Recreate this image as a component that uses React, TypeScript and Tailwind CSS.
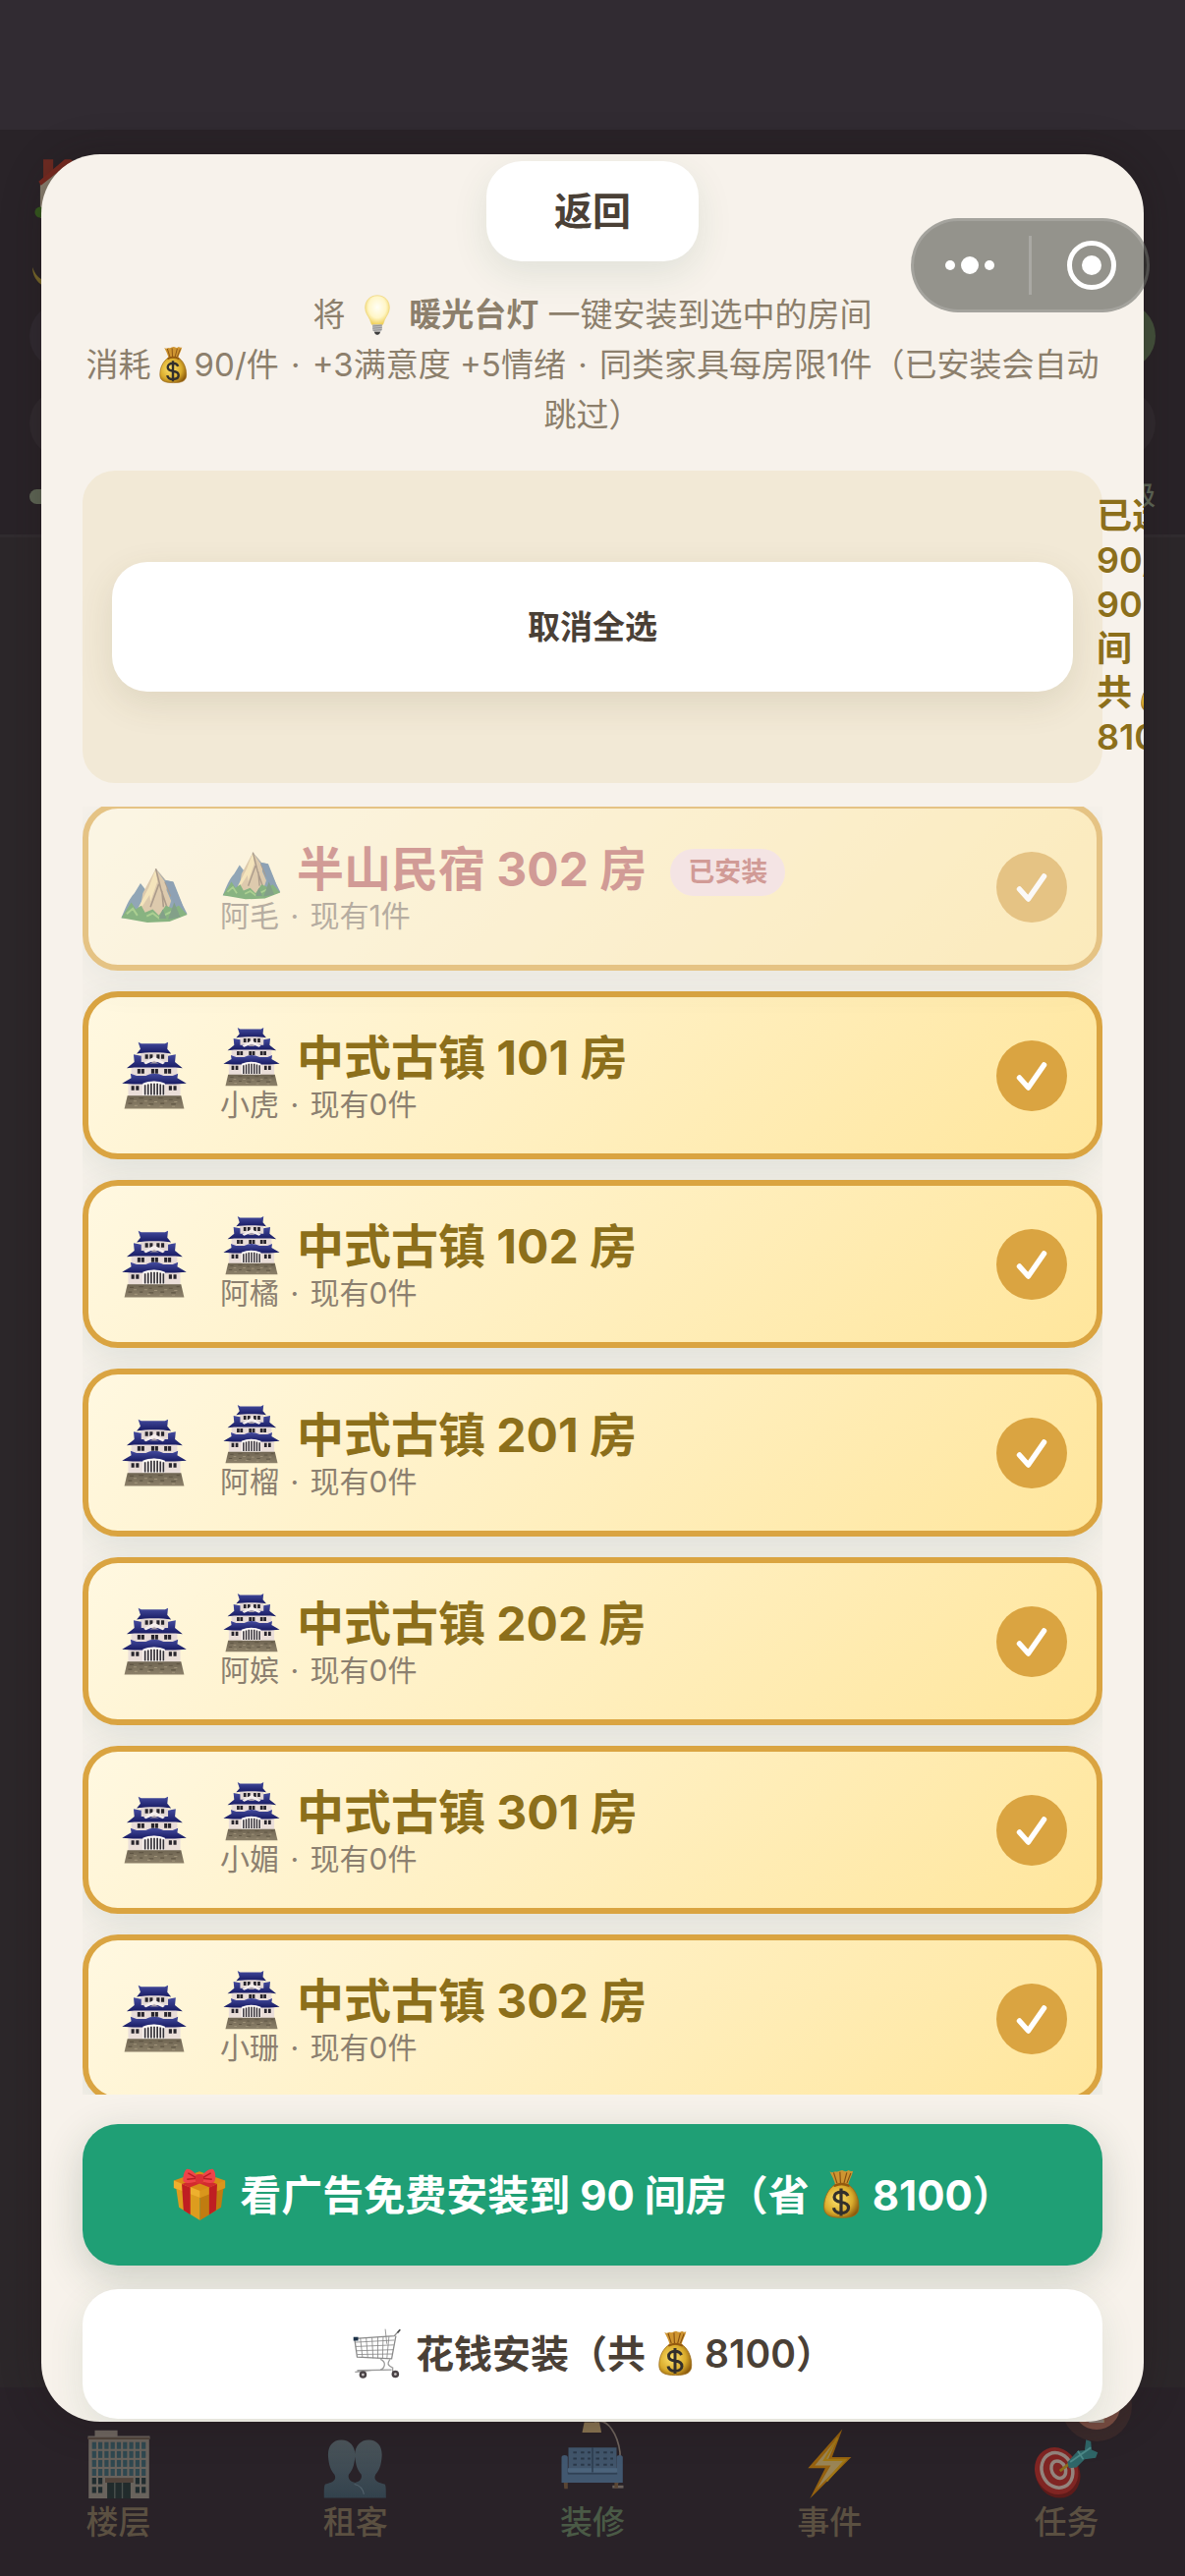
import type { ReactNode } from "react";

type IconProps = { className?: string };

function Art({ className = "", label, children }: { className?: string; label: string; children: ReactNode }) {
  return (
    <svg viewBox="0 0 100 100" role="img" aria-label={label} className={`overflow-visible ${className}`} fill="none">
      {children}
    </svg>
  );
}

function Bulb({ className }: IconProps) {
  return (
    <Art className={className} label="灯泡">
      <defs>
        <radialGradient id="bulb" cx="0.5" cy="0.4" r="0.6">
          <stop offset="0" stopColor="#fffef6" />
          <stop offset="0.6" stopColor="#fff6c8" />
          <stop offset="1" stopColor="#efcf55" />
        </radialGradient>
      </defs>
      <path d="M50 4C33 4 22 16 22 32c0 13 7 19 11 28 2 5 3 10 5 12h24c2-2 3-7 5-12 4-9 11-15 11-28C78 16 67 4 50 4Z" fill="url(#bulb)" stroke="#ecd275" strokeWidth="1.5" />
      <path d="M39 71h22v13l-4 4H43l-4-4Z" fill="#b9b9b9" />
      <path d="M39 75l22-2M39 80l22-2M40 85l20-2" stroke="#858585" strokeWidth="1.6" />
      <path d="M43 88h14c-1 5-4 7-7 7s-6-2-7-7Z" fill="#3e3e3e" />
    </Art>
  );
}

function MoneyBag({ className }: IconProps) {
  return (
    <Art className={className} label="金币">
      <defs>
        <radialGradient id="bag" cx="0.4" cy="0.45" r="0.65">
          <stop offset="0" stopColor="#ffe36c" />
          <stop offset="0.65" stopColor="#d9ab2c" />
          <stop offset="1" stopColor="#8c5a0c" />
        </radialGradient>
      </defs>
      <path d="M30 9c4 3 7 1 10 0 4 2 8-2 12-2 4 2 8 3 11 0 3 2 6 2 8 1-2 9-7 16-9 25H40c-2-9-6-16-10-24Z" fill="#cf9531" />
      <path d="M37 11l6 19M48 10l1 20M60 11l-5 19M67 12l-7 18" stroke="#855012" strokeWidth="2" />
      <path d="M40 32h22c12 7 19 22 19 39 0 14-8 19-30 19s-31-5-31-19c0-17 8-32 20-39Z" fill="url(#bag)" stroke="#9b6a17" strokeWidth="1.5" />
      <path d="M39 34c8-4 16-4 24 0" stroke="#93590f" strokeWidth="4" strokeLinecap="round" />
      <path d="M62 52c-2-5-6-7-12-7-7 0-12 4-12 9 0 6 5 8 12 9 8 1 13 4 13 10s-6 9-13 9-12-3-13-9M50 39v48" stroke="#33302c" strokeWidth="5.5" />
    </Art>
  );
}

function Mountain({ className }: IconProps) {
  return (
    <Art className={className} label="山">
      <path d="M7 90C12 78 17 65 24 58l8-13 8 10 12-29 13 15 10 2 12 30 6 12-24 7-29 1Z" fill="#4e7594" />
      <path d="M52 26L35 58l-5 32 34 2 8-24-6-14 1-10-6-8Z" fill="#cdb184" />
      <path d="M52 26L43 50l-14 27 6-3 9-14 1 9 9-26Z" fill="#f3dc9c" />
      <path d="M52 26l7 28 11 32M56 46L45 76M60 55l2 21M64 43l8 19" stroke="#79624c" strokeWidth="2" />
      <path d="M52 26l12 15 10 2 18 43-15-8-7-22-6-13Z" fill="#496d90" />
      <path d="M7 90l13-20 6 9 7-5 5 9 10-4 8 8 9-13 9 4 8-4 11 12-23 9-29 1Z" fill="#3f8a3c" />
      <path d="M14 85l8-7 6 9M40 88l8-4 9 7M64 86l8-4 10 4" stroke="#79b957" strokeWidth="2.5" />
      <path d="M68 92l8-22 8 19M56 91l5-12 5 12" fill="#376a49" />
    </Art>
  );
}

function Castle({ className }: IconProps) {
  return (
    <Art className={className} label="古镇">
      <defs>
        <linearGradient id="roof" x1="0" y1="0" x2="0" y2="1">
          <stop offset="0" stopColor="#444b9e" />
          <stop offset="1" stopColor="#181b63" />
        </linearGradient>
        <linearGradient id="stone" x1="0" y1="0" x2="0" y2="1">
          <stop offset="0" stopColor="#6f6552" />
          <stop offset="1" stopColor="#8d816a" />
        </linearGradient>
      </defs>
      <path d="M32 18h36v16H32Z" fill="#e3d8d5" />
      <path d="M29 6l4 2h31l4-2-1 9 5 6c-12-2-32-2-45 0l5-6Z" fill="url(#roof)" />
      <path d="M20 36h60v20H20Z" fill="#e8dcd8" />
      <path d="M23 22l10 2v8h35v-8l10-2-1 10 10 8-9-1H24l-10 1 10-8Z" fill="url(#roof)" />
      <path d="M38 22h4v6h-4ZM44 22h4v6h-4ZM53 22h4v6h-4ZM59 22h4v6h-4Z" fill="#27242c" />
      <path d="M36 33l14-8 14 8-3 2-11-5-11 5Z" fill="#f5eeec" />
      <path d="M44 34l6-3 6 3Z" fill="#a59ba5" />
      <path d="M28 41h4v6h-4ZM33 41h4v6h-4ZM46 41h4v6h-4ZM51 41h4v6h-4ZM63 41h4v6h-4ZM68 41h4v6h-4Z" fill="#27242c" />
      <path d="M16 56h68v21H16Z" fill="#eaded9" />
      <path d="M19 47l8 3h12c4-2 7-3 11-3s8 1 12 3h12l7-3-1 6 12 7-15 1H63c-8-5-18-5-26 0H22L8 60l12-7Z" fill="url(#roof)" />
      <path d="M35 76V60c9-4 20-4 29 0v16Z" fill="#fffaf6" />
      <path d="M38 75V62M42 75V61M46 75V60M50 75V60M54 75V60M58 75V61M62 75V62" stroke="#353138" strokeWidth="2.2" />
      <path d="M20 63h4v6h-4ZM26 63h4v6h-4ZM69 63h4v6h-4ZM75 63h4v6h-4Z" fill="#27242c" />
      <path d="M15 76h70l4 17H11Z" fill="url(#stone)" />
      <path d="M18 80h5M30 79h6M43 81h4M55 79h6M69 81h5M79 79h4M16 86h5M31 86h4M43 87h6M58 86h5M72 87h6" stroke="#5f5543" strokeWidth="1.4" />
      <path d="M23 83h4M37 83h4M50 84h4M63 83h4M76 84h4M24 89h4M41 89h4M57 90h4M73 90h4" stroke="#a09379" strokeWidth="1.4" />
    </Art>
  );
}

function Gift({ className }: IconProps) {
  return (
    <Art className={className} label="礼物">
      <path d="M8 31l43 19v45L14 72Z" fill="#dd9c1e" />
      <path d="M93 31L51 50v45l37-23Z" fill="#c07c10" />
      <path d="M5 25L50 9l45 16v13L51 55 5 38Z" fill="#d98d17" />
      <path d="M5 25l46 18v12L5 38Z" fill="#eeb02e" />
      <path d="M95 25L51 43v12l44-17Z" fill="#d9961c" />
      <path d="M19 31l15 6v48l-12-8ZM81 31l-14 6v48l12-8Z" fill="#bf1e22" />
      <path d="M19 31l48-17 12 5-46 18ZM81 31L34 14l-12 5 46 18Z" fill="#d22b2e" />
      <path d="M48 19C41 9 32 3 27 5c-5 5-7 17-5 22 7 4 18 2 26-3ZM52 19c7-10 17-16 22-14 5 5 5 17 2 22-6 4-16 2-24-3Z" fill="#ee4449" />
      <path d="M30 12l16 9-18 2M70 12l-16 9 18 2" stroke="#b81d24" strokeWidth="2.5" />
      <rect x="43" y="14" width="14" height="16" rx="5" fill="#dc3036" />
    </Art>
  );
}

function Cart({ className }: IconProps) {
  return (
    <Art className={className} label="购物车">
      <path d="M7 21l75-5 11-12M7 21l5 35 65 3 8-43" stroke="#8b8b8b" strokeWidth="2.4" />
      <path d="M8 28l74-4M9 36l72-3M10 44l70-2M12 51l66-1M18 20l4 36M29 19l3 38M40 19l2 39M51 18v40M61 18l-1 40M72 17l-4 42M65 3l3 28" stroke="#858585" strokeWidth="1.5" />
      <path d="M56 60c12 5 8 17 0 20L8 84M74 60c-5 7-6 11 5 16v9M12 81l65-1" stroke="#9b9b9b" strokeWidth="2.4" />
      <path d="M5 18h9v7H5Z" fill="#1d3249" />
      <path d="M93 4l-5 6" stroke="#4b4b4b" strokeWidth="3" />
      <circle cx="23" cy="89" r="7" fill="#4a4346" />
      <circle cx="84" cy="88" r="7" fill="#4a4346" />
      <circle cx="23" cy="89" r="2.5" fill="#cfcaca" />
      <circle cx="84" cy="88" r="2.5" fill="#cfcaca" />
    </Art>
  );
}

function House({ className }: IconProps) {
  return (
    <Art className={className} label="房子">
      <path d="M18 8h13v22L18 40Z" fill="#6e2b22" />
      <path d="M50 14L14 40v44h72V40Z" fill="#8b8170" />
      <path d="M46 8L12 37l3 5 35-28 35 28 3-5-34-29Z" fill="#7a2a20" />
      <circle cx="14" cy="77" r="7" fill="#35591e" />
    </Art>
  );
}

function Building({ className }: IconProps) {
  const rows = [21, 34, 47, 60];
  const cols = [11, 20, 29, 38, 47, 56, 65, 74, 83];
  return (
    <Art className={className} label="楼层">
      <path d="M15 4h33v9H15ZM5 12h90v4H5Z" fill="#6e6660" />
      <path d="M5 14h90v3H5Z" fill="#51443c" />
      <path d="M6 17h88v86H6Z" fill="#69635d" />
      {rows.map((y) => cols.map((x) => <rect key={`${x}-${y}`} x={x} y={y} width="6" height="10" fill="#2f4850" />))}
      <path d="M11 73h6v9h-6ZM20 73h6v9h-6ZM74 73h6v9h-6ZM83 73h6v9h-6ZM11 86h6v9h-6ZM20 86h6v9h-6ZM74 86h6v9h-6ZM83 86h6v9h-6Z" fill="#202c2f" />
      <path d="M30 73h41v7H30Z" fill="#4f423a" />
      <path d="M33 80h34v23H33Z" fill="#212b2c" />
      <path d="M44 80v23M55 80v23" stroke="#4b514e" strokeWidth="2" />
    </Art>
  );
}

function People({ className }: IconProps) {
  return (
    <Art className={className} label="租客">
      <defs>
        <linearGradient id="people" x1="0" y1="0" x2="0" y2="1">
          <stop offset="0" stopColor="#4b555b" />
          <stop offset="1" stopColor="#33424d" />
        </linearGradient>
      </defs>
      <path d="M29 18c-13 0-20 10-19 24 1 13 4 20 9 26 4 8-2 12-13 14-2 2-2 6-2 20h90c0-14 0-18-2-20-11-2-17-6-13-14 5-6 8-13 9-26 1-14-6-24-19-24S48 28 49 42c1 13 4 20 9 26 2 6-2 10-9 12-7-2-11-6-9-12 5-6 8-13 9-26 1-14-7-24-20-24Z" fill="url(#people)" />
      <path d="M48 82c9 2 13 8 14 15" stroke="#52616b" strokeWidth="1.5" />
    </Art>
  );
}

function Sofa({ className }: IconProps) {
  return (
    <Art className={className} label="装修">
      <path d="M53-8c20-8 34 20 37 44 1 21-1 35-5 51" stroke="#6e645d" strokeWidth="2.4" />
      <path d="M38-8h22l3 15H35Z" fill="#8a7552" />
      <path d="M79 86h16" stroke="#69605a" strokeWidth="4" />
      <path d="M8 78h6v11H9ZM82 78h5v10h-5Z" fill="#594534" />
      <path d="M15 29h70v38H15Z" fill="#41556b" />
      <path d="M5 43c0-4 9-4 9 0v23h71V43c0-4 9-4 9 0v37H5Z" fill="#425870" />
      <path d="M14 59h72v6H14Z" fill="#4c647c" />
      <path d="M50 29v36M14 67h72" stroke="#2b3b4d" strokeWidth="2" />
      {[36, 45, 54].map((y) => (
        <path key={y} d={`M22 ${y}h5M33 ${y}h5M43 ${y}h4M55 ${y}h5M66 ${y}h5M76 ${y}h4`} stroke="#2a3849" strokeWidth="3" />
      ))}
    </Art>
  );
}

function Bolt({ className }: IconProps) {
  return (
    <Art className={className} label="事件">
      <path d="M69 2L19 59h25L22 103 82 43H54Z" fill="#95610f" />
      <path d="M62 15L29 55h23L32 89 73 47H48Z" fill="#998455" />
      <path d="M62 15L43 47h30L46 78" stroke="#a17714" strokeWidth="3" />
    </Art>
  );
}

function Target({ className }: IconProps) {
  return (
    <Art className={className} label="任务">
      <ellipse cx="38" cy="67" rx="32" ry="36" transform="rotate(-25 38 67)" fill="#5d1b1a" />
      <ellipse cx="36" cy="63" rx="31" ry="35" transform="rotate(-25 36 63)" fill="#802523" />
      <ellipse cx="37" cy="62" rx="22" ry="26" transform="rotate(-25 37 62)" stroke="#93847d" strokeWidth="5" />
      <ellipse cx="39" cy="61" rx="10" ry="13" transform="rotate(-25 39 61)" stroke="#93847d" strokeWidth="5" />
      <path d="M41 63l13-10" stroke="#8b6d1c" strokeWidth="4" />
      <path d="M52 50l15-16 10-1 2-16 7 3 1 12 9 4-3 8-16 2-12 12-11 1Z" fill="#2f6668" />
      <path d="M56 50l30-21M67 34l8 12" stroke="#4d8a89" strokeWidth="2.5" />
    </Art>
  );
}

type Room = { icon: "mountain" | "castle"; name: string; tenant: string; count: number; installed?: boolean };

const rooms: Room[] = [
  { icon: "mountain", name: "半山民宿 302 房", tenant: "阿毛", count: 1, installed: true },
  { icon: "castle", name: "中式古镇 101 房", tenant: "小虎", count: 0 },
  { icon: "castle", name: "中式古镇 102 房", tenant: "阿橘", count: 0 },
  { icon: "castle", name: "中式古镇 201 房", tenant: "阿榴", count: 0 },
  { icon: "castle", name: "中式古镇 202 房", tenant: "阿嫔", count: 0 },
  { icon: "castle", name: "中式古镇 301 房", tenant: "小媚", count: 0 },
  { icon: "castle", name: "中式古镇 302 房", tenant: "小珊", count: 0 },
];

function Dot() {
  return <span className="mx-[3px]">·</span>;
}

function RoomRow({ room }: { room: Room }) {
  const Icon = room.icon === "mountain" ? Mountain : Castle;
  return (
    <li className={room.installed ? "opacity-60" : ""}>
      <label className="flex h-[171px] items-center rounded-[36px] border-6 border-[#daa441] bg-linear-135 from-[#fff8e1] to-[#ffe69c] pr-[30px] pl-7 shadow-[0_12px_36px_rgba(30,90,70,0.1)]">
        <Icon className="h-[78px] w-[78px] shrink-0" />
        <span className="ml-7 flex min-w-0 flex-1 flex-col">
          <span className={`flex h-[59px] items-center text-[48px] leading-[59px] font-bold ${room.installed ? "text-[#b8625f]" : "text-[#8c6f1b]"}`}>
            <Icon className="mr-3 -ml-[2px] h-[68px] w-[68px] shrink-0" />
            <span>{room.name}</span>
            {room.installed && (
              <span className="mt-2 ml-6 rounded-full bg-[#f3dce1] px-[18px] text-[27px] leading-[48px] font-semibold">已安装</span>
            )}
          </span>
          <span className="text-[30px] leading-[37px] text-[#8c8070]">
            {room.tenant} <Dot /> 现有{room.count}件
          </span>
        </span>
        <span className="grid h-[72px] w-[72px] shrink-0">
          <input type="checkbox" defaultChecked className="col-start-1 row-start-1 h-[72px] w-[72px] appearance-none rounded-full bg-[#daa441]" />
          <svg viewBox="0 0 72 72" className="pointer-events-none col-start-1 row-start-1" fill="none" aria-hidden="true">
            <path d="M23.5 38L32.5 48L48.5 25" stroke="#fff" strokeWidth="5.5" strokeLinecap="round" strokeLinejoin="round" />
          </svg>
        </span>
      </label>
    </li>
  );
}

const tabs = [
  { label: "楼层", Icon: Building },
  { label: "租客", Icon: People },
  { label: "装修", Icon: Sofa, active: true },
  { label: "事件", Icon: Bolt },
  { label: "任务", Icon: Target, badge: 2 },
];

function Backdrop() {
  return (
    <div className="flex min-h-screen flex-col bg-[#2c272a]">
      <div className="h-[132px] bg-[#312b32]" />
      <header className="flex flex-col border-b-3 border-[#312c30] bg-[#292328] px-[30px] pt-6 pb-6">
        <House className="h-[78px] w-[78px]" />
        <svg viewBox="0 0 42 42" className="mt-6 h-[42px] w-[42px]" aria-hidden="true">
          <path d="M3 14c3 8 7 12 13 14l-2 5C7 29 3 22 3 14Z" fill="#77672a" />
        </svg>
        <div className="mt-2 flex h-[68px] justify-between">
          <div className="w-1/2 rounded-[36px] bg-[#302a31]" />
          <div className="w-1/4 rounded-[36px] bg-[#44523c]" />
        </div>
        <div className="mt-5 h-[70px] rounded-[36px] bg-[#302a2f]" />
        <div className="mt-6 flex h-[30px] items-center justify-between text-[27px] leading-[30px] font-medium text-[#5f6858]">
          <div className="h-[15px] w-1/2 rounded-full bg-[#5f6756]" />
          <span>级</span>
        </div>
      </header>
      <div className="flex-1" />
      <nav className="grid h-[192px] grid-cols-5 bg-[#292228]">
        {tabs.map(({ label, Icon, active, badge }) => (
          <button key={label} type="button" className={`relative flex flex-col items-center pt-[41px] text-[33px] leading-[45px] font-medium ${active ? "text-[#4a5a46]" : "text-[#5b5041]"}`}>
            <Icon className="h-[70px] w-[70px]" />
            <span className="mt-1">{label}</span>
            {badge && (
              <span className="absolute -top-[17px] right-[54px] -z-0 grid h-[72px] w-[72px] place-items-center rounded-full bg-[#3a2a2b]">
                <span className="h-12 w-12 rounded-full bg-[#7a4e43] pt-3 text-[30px] leading-[36px] font-bold text-[#8f857d]">{badge}</span>
              </span>
            )}
          </button>
        ))}
      </nav>
    </div>
  );
}

function Capsule() {
  return (
    <div className="absolute top-[222px] right-9 flex h-24 w-[243px] items-center rounded-full border-3 border-white/15 bg-[#393b36]/52">
      <button type="button" aria-label="更多" className="flex h-full flex-1 items-center justify-center gap-[6px] pr-1">
        <span className="h-[10px] w-[10px] rounded-full bg-white" />
        <span className="h-[18px] w-[18px] rounded-full bg-white" />
        <span className="h-[10px] w-[10px] rounded-full bg-white" />
      </button>
      <span className="h-[60px] w-[3px] bg-white/20" />
      <button type="button" aria-label="关闭" className="flex h-full flex-1 items-center justify-center pl-1">
        <span className="grid h-[50px] w-[50px] place-items-center rounded-full border-5 border-white">
          <span className="h-5 w-5 rounded-full bg-white" />
        </span>
      </button>
    </div>
  );
}

export default function App() {
  return (
    <div className="relative min-h-screen overflow-hidden font-[Inter,'Noto_Sans_CJK_SC',sans-serif] text-[#4a4036]">
      <Backdrop />
      <div className="absolute inset-0 flex items-center px-[42px]">
        <section className="flex h-[88vh] w-full flex-col overflow-hidden rounded-[60px] bg-[#f7f2eb] px-[42px] pt-[7px] shadow-[0_0_40px_rgba(30,20,20,0.3)]">
          <button type="button" className="h-[102px] w-[216px] shrink-0 self-center rounded-[36px] bg-white text-[39px] font-semibold shadow-[0_12px_36px_rgba(30,90,60,0.1)]">
            返回
          </button>
          <p className="mt-[29px] shrink-0 text-center text-[33px] leading-[51px] text-[#8c7f6c]">
            将 <Bulb className="mx-px -mt-1 inline-block h-11 w-11" /> <strong className="font-semibold">暖光台灯</strong> 一键安装到选中的房间
            <br />
            消耗
            <MoneyBag className="-mt-1 inline-block h-11 w-11" />
            90/件 <Dot /> +3满意度 +5情绪 <Dot /> 同类家具每房限1件（已安装会自动跳过）
          </p>
          <div className="mt-[31px] flex shrink-0 items-center gap-6 rounded-[33px] bg-[#f2e9d6] px-[30px] py-6">
            <button type="button" className="h-[132px] w-full shrink-0 rounded-[36px] bg-white text-[33px] font-semibold shadow-[0_12px_36px_rgba(80,70,30,0.12)]">
              取消全选
            </button>
            <div className="shrink-0 text-[36px] leading-[45px] font-semibold whitespace-nowrap text-[#8c6f1b]">
              <span className="block">已选</span>
              <span className="block">90/</span>
              <span className="block">90</span>
              <span className="block">间</span>
              <span className="flex h-[45px] items-center">
                共<MoneyBag className="h-12 w-12" />
              </span>
              <span className="block">8100</span>
            </div>
          </div>
          <div className="mt-6 h-[50vh] shrink-0 overflow-hidden">
            <ul className="-mt-1 flex flex-col gap-[21px]">
              {rooms.map((room) => (
                <RoomRow key={room.name} room={room} />
              ))}
            </ul>
          </div>
          <button type="button" className="mt-[30px] flex h-36 shrink-0 items-center justify-center rounded-[36px] bg-[#1f9f75] text-[42px] font-bold text-white shadow-[0_12px_42px_rgba(30,60,40,0.2)]">
            <Gift className="mr-3 h-[58px] w-[58px]" />
            看广告免费安装到 90 间房（省
            <MoneyBag className="mx-[3px] h-[58px] w-[58px]" />
            8100）
          </button>
          <button type="button" className="mt-6 flex h-[132px] shrink-0 items-center justify-center rounded-[36px] bg-white text-[39px] font-semibold shadow-[0_12px_36px_rgba(30,90,60,0.1)]">
            <Cart className="mr-3 h-[54px] w-[54px]" />
            花钱安装（共
            <MoneyBag className="mx-[3px] h-[54px] w-[54px]" />
            8100）
          </button>
        </section>
      </div>
      <Capsule />
    </div>
  );
}
